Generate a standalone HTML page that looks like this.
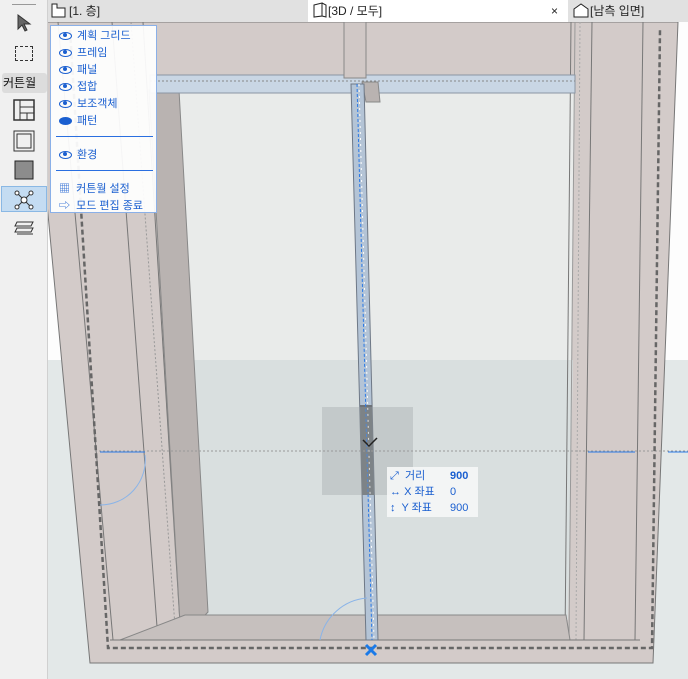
<!DOCTYPE html>
<html><head><meta charset="utf-8"><style>
*{margin:0;padding:0;box-sizing:border-box}
body{width:688px;height:679px;overflow:hidden;background:#e4e8e8;font-family:"Liberation Sans","Noto Sans CJK KR",sans-serif;position:relative}
#tb{position:absolute;left:0;top:0;width:48px;height:679px;background:#f0f0f0;border-right:1px solid #d0d0d0}
#tabs{position:absolute;left:48px;top:0;width:640px;height:22px;background:#e1e1e1}
.tab{position:absolute;top:0;height:22px;font-size:12px;line-height:22px;color:#222}
#menu{position:absolute;left:50px;top:25px;width:107px;height:188px;background:rgba(255,255,255,.93);border:1px solid #8ab0e8;font-size:11px;color:#1a5fd0}
#menu div{position:absolute;left:8px;white-space:nowrap}
#menu hr{position:absolute;left:5px;width:97px;border:0;border-top:1px solid #2a6fe0}
.eye{display:inline-block;width:13px;height:8px;border:1.5px solid #1a5fd0;border-radius:50%;margin-right:5px;vertical-align:middle;position:relative}
.eye:after{content:"";position:absolute;left:3px;top:0px;width:4px;height:4px;border-radius:50%;background:#1a5fd0}
#info{position:absolute;left:387px;top:467px;width:91px;height:50px;background:rgba(245,246,246,.92);font-size:11px;color:#1a5fd0;line-height:16px;padding-top:1px}
</style></head><body>
<svg width="688" height="679" style="position:absolute;left:0;top:0">
<rect x="48" y="22" width="640" height="340" fill="#fdfdfd"/>
<rect x="48" y="360" width="640" height="319" fill="#e3e8e8"/>
<!-- outer frame -->
<polygon points="30,22 678,22 653,663 90,663" fill="#d3cbc9" stroke="#777"/>
<!-- glass -->
<polygon points="150,92 575,92 568,620 185,620" fill="#e9ebea"/>
<polygon points="165,360 573,360 568,620 185,620" fill="#d9dfdf"/>
<!-- left jamb lines -->
<line x1="58" y1="22" x2="113" y2="640" stroke="#777"/>
<line x1="112" y1="22" x2="158" y2="640" stroke="#777"/>
<line x1="131" y1="22" x2="176" y2="640" stroke="#999" stroke-dasharray="2,2"/>
<line x1="143" y1="22" x2="181" y2="640" stroke="#777"/>
<polygon points="149,90 179,90 208,612 181,640" fill="#b9b3b1" stroke="#888"/>
<!-- right jamb lines -->
<line x1="571" y1="22" x2="565" y2="640" stroke="#777"/>
<line x1="575" y1="22" x2="569" y2="640" stroke="#999"/>
<line x1="580" y1="22" x2="576" y2="640" stroke="#aaa" stroke-dasharray="2,2"/>
<line x1="592" y1="22" x2="584" y2="640" stroke="#777"/>
<line x1="643" y1="22" x2="635" y2="640" stroke="#777"/>
<!-- sill -->
<polygon points="185,615 566,615 570,640 120,640" fill="#c6c0be" stroke="#888"/>
<line x1="110" y1="640" x2="640" y2="640" stroke="#777"/>
<!-- top transom -->
<rect x="150" y="75" width="425" height="18" fill="#c9d6e4" stroke="#8a96a4"/>
<line x1="150" y1="81" x2="575" y2="81" stroke="#888" stroke-dasharray="2,2"/>
<!-- top vertical stub -->
<rect x="344" y="22" width="22" height="56" fill="#d0c8c6" stroke="#888"/>
<polygon points="362,82 378,82 380,102 366,102" fill="#b9b3b1" stroke="#888"/>
<!-- mullion -->
<polygon points="351,84 364,84 378,640 366,640" fill="#b4c4d6" stroke="#6e7886"/>
<polygon points="360,405 372,405 374,495 362,495" fill="#6e7378"/>
<line x1="357" y1="84" x2="372" y2="640" stroke="#2a7ae8" stroke-dasharray="3,2"/>
<line x1="359" y1="84" x2="374" y2="640" stroke="#fff" stroke-dasharray="2,4"/>
<!-- snap box -->
<rect x="322" y="407" width="91" height="88" fill="#9aa0a2" opacity=".35"/>
<!-- horizontal dotted -->
<line x1="95" y1="451" x2="688" y2="451" stroke="#999" stroke-dasharray="2,2"/>
<line x1="100" y1="452" x2="145" y2="452" stroke="#2a7ae8"/>
<line x1="588" y1="452" x2="635" y2="452" stroke="#2a7ae8"/>
<line x1="668" y1="452" x2="688" y2="452" stroke="#2a7ae8"/>
<!-- dashed outline -->
<polyline points="70,30 108,648 652,648 660,30" fill="none" stroke="#666" stroke-width="2.5" stroke-dasharray="5,3"/>
<!-- arcs -->
<path d="M320,640 A52,52 0 0 1 367,598" fill="none" stroke="#8ab4e8"/>
<path d="M100,505 A45,45 0 0 0 145,455" fill="none" stroke="#8ab4e8"/>
<path d="M366,645 l10,10 M376,645 l-10,10" stroke="#1a7ae8" stroke-width="3"/>
<path d="M363,440 l6,6 l8,-8" fill="none" stroke="#222" stroke-width="1.5"/>
</svg>
<div id="tb">
<div style="position:absolute;left:12px;top:4px;width:24px;border-top:1px solid #999"></div>
<svg style="position:absolute;left:15px;top:14px" width="18" height="18"><path d="M3,1 L3,15 L7,11 L10,17 L12,16 L9,10 L15,10 Z" fill="#666" stroke="#333"/></svg>
<div style="position:absolute;left:15px;top:46px;width:18px;height:15px;border:1.5px dashed #333"></div>
<div style="position:absolute;left:2px;top:73px;width:45px;height:20px;background:#dcdcdc;border-radius:3px;font-size:12px;line-height:20px;padding-left:1px;color:#111">커튼월</div>
<svg style="position:absolute;left:13px;top:99px" width="22" height="22"><rect x="1" y="1" width="20" height="20" fill="none" stroke="#333" stroke-width="1.5"/><path d="M7,1V21M7,8H21M7,14H21M14,14V21" stroke="#333"/></svg>
<svg style="position:absolute;left:13px;top:130px" width="22" height="22"><rect x="1" y="1" width="20" height="20" fill="none" stroke="#333"/><rect x="4" y="4" width="14" height="14" fill="none" stroke="#333"/></svg>
<svg style="position:absolute;left:14px;top:160px" width="20" height="20"><rect x="1" y="1" width="18" height="18" fill="#8c8c8c" stroke="#222"/></svg>
<div style="position:absolute;left:1px;top:186px;width:46px;height:26px;background:#c4dcf2;border:1px solid #8ab8e4"></div>
<svg style="position:absolute;left:14px;top:190px" width="20" height="20"><path d="M3,3L17,17M17,3L3,17" stroke="#333"/><circle cx="10" cy="10" r="3" fill="#fff" stroke="#333"/><circle cx="3" cy="3" r="2" fill="#fff" stroke="#333"/><circle cx="17" cy="3" r="2" fill="#fff" stroke="#333"/><circle cx="3" cy="17" r="2" fill="#fff" stroke="#333"/><circle cx="17" cy="17" r="2" fill="#fff" stroke="#333"/></svg>
<svg style="position:absolute;left:14px;top:219px" width="22" height="20"><path d="M3,3H19L17,7H1ZM3,9H19L17,13H1ZM3,15H19" fill="none" stroke="#333"/></svg>
</div>
<div id="tabs">
<div class="tab" style="left:3px"><svg width="18" height="16" style="vertical-align:-3px"><path d="M1,15V2H6V6H14V15Z" fill="#fff" stroke="#222"/></svg>[1. 층]</div>
<div class="tab" style="left:260px;width:260px;background:#fff;padding-left:4px"><svg width="16" height="16" style="vertical-align:-3px"><path d="M2,3L10,1V14L2,15ZM10,1L14,3V15L10,14" fill="none" stroke="#222"/></svg>[3D / 모두]<span style="position:absolute;right:10px">×</span></div>
<div class="tab" style="left:524px"><svg width="18" height="16" style="vertical-align:-3px"><path d="M2,15V7L9,2L16,7V15Z" fill="#fff" stroke="#222"/></svg>[남측 입면]</div>
</div>
<div id="menu">
<div style="top:1px"><span class="eye"></span>계획 그리드</div>
<div style="top:18px"><span class="eye"></span>프레임</div>
<div style="top:35px"><span class="eye"></span>패널</div>
<div style="top:52px"><span class="eye"></span>접합</div>
<div style="top:69px"><span class="eye"></span>보조객체</div>
<div style="top:86px"><span class="eye" style="background:#1a5fd0"></span>패턴</div>
<hr style="top:110px">
<div style="top:120px"><span class="eye"></span>환경</div>
<hr style="top:144px">
<div style="top:154px">▦&nbsp;&nbsp;커튼월 설정</div>
<div style="top:171px">⇨&nbsp;&nbsp;모드 편집 종료</div>
</div>
<div id="info">
<div>&nbsp;⤢&nbsp; 거리 <span style="position:absolute;left:63px;font-weight:bold">900</span></div>
<div>&nbsp;↔ X 좌표 <span style="position:absolute;left:63px">0</span></div>
<div>&nbsp;↕&nbsp; Y 좌표 <span style="position:absolute;left:63px">900</span></div>
</div>
</body></html>
